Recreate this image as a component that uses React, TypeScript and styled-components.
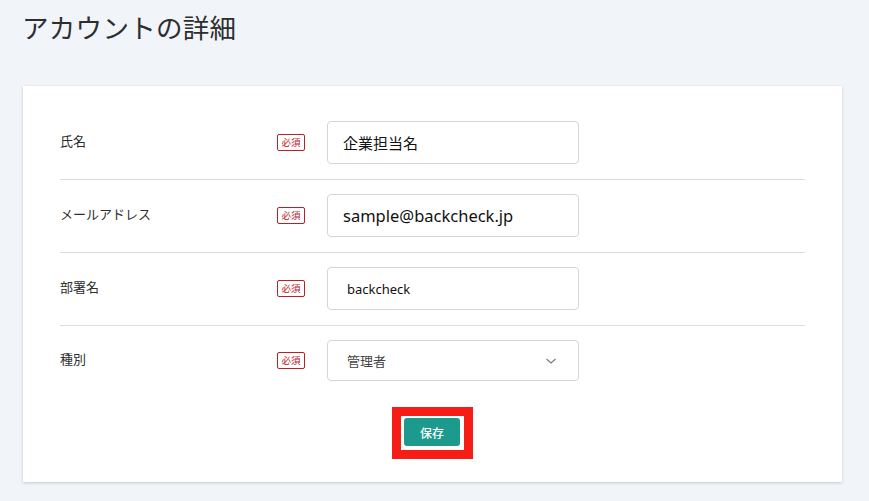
import React from "react";
import styled, { createGlobalStyle } from "styled-components";

const Global = createGlobalStyle`
  html, body { margin: 0; padding: 0; background: #f1f4f9; }
  body { font-family: "Noto Sans", "Noto Sans CJK JP", sans-serif; color: #333; }
`;

const Page = styled.div`
  padding: 11px 27px 19px 23px;
  min-height: 501px;
  box-sizing: border-box;
`;

const Title = styled.h1`
  margin: 0 0 44px -1px;
  font-family: "Noto Sans CJK JP", sans-serif;
  font-weight: 400;
  font-size: 26.5px;
  line-height: 31px;
  color: #2e2e2e;
  letter-spacing: 0.3px;
`;

const Card = styled.section`
  background: #fff;
  box-shadow: 0 1px 3px rgba(0, 0, 0, 0.18);
  padding: 21px 37px 23px 37px;
  display: flex;
  flex-direction: column;
`;

const Row = styled.div<{ $last?: boolean }>`
  display: flex;
  align-items: center;
  padding: 14px 0 ${(p) => (p.$last ? "14px" : "15px")};
  border-bottom: ${(p) => (p.$last ? "none" : "1px solid #dcdcdc")};
`;

const Label = styled.div`
  width: 217px;
  font-family: "Noto Sans CJK JP", sans-serif;
  font-size: 13px;
  line-height: 18px;
  padding-bottom: 4px;
  color: #2e2e2e;
`;

const Badge = styled.span`
  box-sizing: border-box;
  width: 28px;
  height: 17px;
  border: 1px solid #b8202a;
  border-radius: 2px;
  color: #b8202a;
  font-family: "Noto Sans CJK JP", sans-serif;
  font-size: 9.5px;
  line-height: 15px;
  text-align: center;
  margin-right: 22px;
  flex: none;
`;

const Field = styled.div<{ $size: number; $pad: number; $h: number; $color?: string }>`
  box-sizing: border-box;
  width: 252px;
  height: ${(p) => p.$h}px;
  border: 1px solid #d6d6d6;
  border-radius: 4px;
  padding: 0 ${(p) => p.$pad}px;
  display: flex;
  align-items: center;
  justify-content: space-between;
  font-family: "Noto Sans", "Noto Sans CJK JP", sans-serif;
  font-size: ${(p) => p.$size}px;
  color: ${(p) => p.$color || "#111"};
`;

const Chevron = styled.svg`
  width: 12px;
  height: 8px;
  margin-right: 2px;
`;

const Actions = styled.div`
  display: flex;
  justify-content: center;
  margin-top: 12px;
`;

const Highlight = styled.div`
  border: 9px solid #f51d16;
  background: #fff;
  padding: 2px 4px 4px 3px;
  display: flex;
`;

const SaveButton = styled.button`
  width: 56px;
  height: 28px;
  border: none;
  border-radius: 3px;
  background: #1b9a8d;
  color: #fff;
  font-family: "Noto Sans CJK JP", sans-serif;
  font-size: 12px;
  font-weight: 500;
  padding: 0;
  cursor: pointer;
`;

export default function App() {
  return (
    <>
      <Global />
      <Page>
        <Title>アカウントの詳細</Title>
        <Card>
          <Row>
            <Label>氏名</Label>
            <Badge>必須</Badge>
            <Field $size={15} $pad={15} $h={43}>企業担当名</Field>
          </Row>
          <Row>
            <Label>メールアドレス</Label>
            <Badge>必須</Badge>
            <Field $size={16.5} $pad={15} $h={43}>sample@backcheck.jp</Field>
          </Row>
          <Row>
            <Label>部署名</Label>
            <Badge>必須</Badge>
            <Field $size={13} $pad={19} $h={43}>backcheck</Field>
          </Row>
          <Row $last>
            <Label>種別</Label>
            <Badge>必須</Badge>
            <Field $size={13} $pad={19} $h={41} $color="#444">
              <span>管理者</span>
              <Chevron viewBox="0 0 12 8">
                <path d="M1.5 2 L6 6 L10.5 2" fill="none" stroke="#777" strokeWidth="1.1" />
              </Chevron>
            </Field>
          </Row>
          <Actions>
            <Highlight>
              <SaveButton>保存</SaveButton>
            </Highlight>
          </Actions>
        </Card>
      </Page>
    </>
  );
}
